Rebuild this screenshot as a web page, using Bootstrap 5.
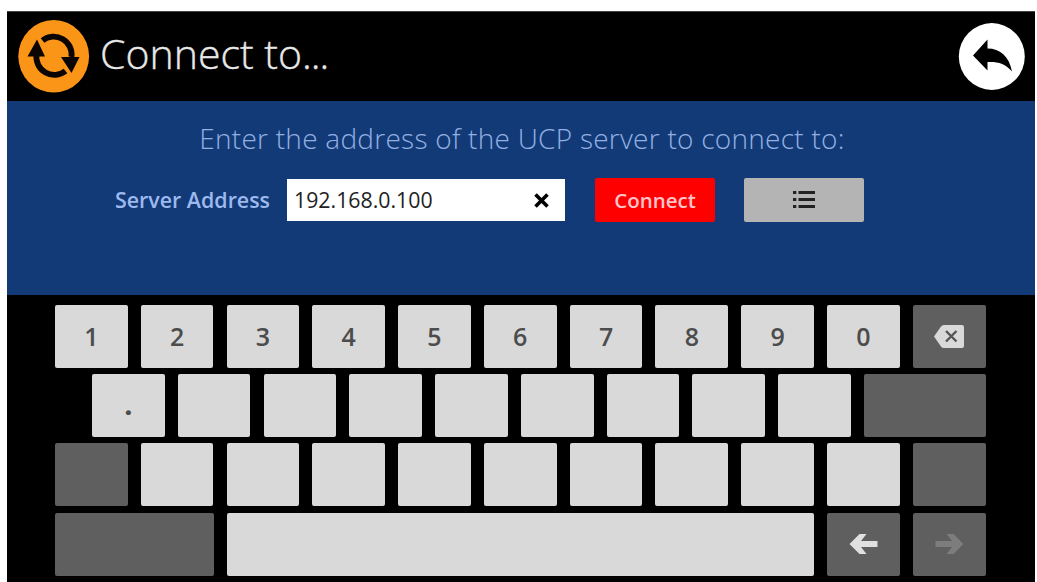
<!DOCTYPE html>
<html lang="en">
<head>
<meta charset="utf-8">
<meta name="viewport" content="width=device-width, initial-scale=1">
<title>Connect to...</title>
<link href="https://cdn.jsdelivr.net/npm/bootstrap@5.3.0/dist/css/bootstrap.min.css" rel="stylesheet">
<style>
body{background:#fff;font-family:"Open Sans","Noto Sans",sans-serif;height:582px;overflow:hidden}
.device{width:1028px;height:571px;margin:11px 0 0 7px;background:#000;border-top:1px solid #444}
.topbar{height:89px;padding:0 10px 0 11px}
.title{font-size:41px;font-weight:300;color:#e8e8e8;line-height:1;margin:0 0 7px 10px;-webkit-text-stroke:.35px #e8e8e8}
.title span{letter-spacing:-1px}
.panel{height:194px;background:#123a77;padding-top:18px}
.prompt{font-size:28px;font-weight:300;letter-spacing:.26px;color:#93b0e3;line-height:38px;margin:0;padding-left:2px}
.addr-row{margin-top:21px;padding-left:108px;height:44px}
.addr-row label{font-size:21.4px;font-weight:600;color:#9db9ee;width:172px;line-height:44px;white-space:nowrap}
.addr-box{width:278px;height:42px;margin-top:1px;background:#fff;padding:0 15px 0 7px}
.addr-box input{font-size:21.3px;color:#222;line-height:30px;outline:0;width:200px}
.action{width:120px;height:44px;border-radius:2px;border:0;padding:0;font-size:20.5px;font-weight:600;line-height:42px}
.go{background:#f00;color:#ffc4cb;margin-left:30px}
.listing{background:#b4b4b4;margin-left:29px}
.keys{padding:10px 49px 0 48px;gap:6.2px}
.key-row{gap:13.1px}
.key{flex:0 0 72.7px;height:63px;border:0;padding:0 0 1px;border-radius:2px;background:#d9d9d9;color:#4c4c4c;font-size:25px;font-weight:600;line-height:62px}
.key.dark{background:#5f5f5f}
.key.dot{font-weight:800}
</style>
</head>
<body>
<main class="device d-flex flex-column">
<header class="topbar d-flex align-items-center">
<svg width="72" height="73" viewBox="0 0 72 73" aria-hidden="true"><ellipse cx="35.700" cy="36.300" rx="35.400" ry="36.200" fill="#fb9517"/><g fill="none" stroke="#0b0603" stroke-width="5.800"><path d="M24.500 20.500A18 18 0 0 1 53.500 37"/><path d="M47.500 51A18 18 0 0 1 18.500 34.500"/></g><path d="M9.500 36.500L19 19.500 27 36.500ZM43 37H61.500L53.500 53Z" fill="#0b0603"/></svg>
<h1 class="title">Connect to<span>...</span></h1>
<button class="btn p-0 border-0 ms-auto d-flex" aria-label="Back"><svg width="67" height="67" viewBox="0 0 67 67"><ellipse cx="33.800" cy="33.500" rx="33" ry="33.400" fill="#fff"/><path d="M15 32.500L29.500 16.500V25.500C42 25.500 51 33 54 48.500 47 40.500 40 38.500 29.500 39V47.500Z" fill="#000"/></svg></button>
</header>
<section class="panel">
<p class="prompt text-center">Enter the address of the UCP server to connect to:</p>
<div class="addr-row d-flex">
<label for="address">Server Address</label>
<div class="addr-box d-flex align-items-center justify-content-between"><input id="address" class="border-0 p-0" value="192.168.0.100"><svg width="17" height="17" viewBox="0 0 17 17" aria-hidden="true"><path d="M2.500 2.500L14.500 14.500M14.500 2.500L2.500 14.500" stroke="#000" stroke-width="3.600"/></svg></div>
<button class="action go">Connect</button>
<button class="action listing d-flex align-items-center justify-content-center" aria-label="Server list"><svg width="22" height="20" viewBox="0 0 22 20"><path d="M0 2.500H3.300M0 9.500H3.300M0 16.500H3.300M5.500 2.500H22M5.500 9.500H22M5.500 16.500H22" stroke="#222" stroke-width="2.800"/></svg></button>
</div>
</section>
<section class="keys d-flex flex-column">
<div class="key-row d-flex"><button class="key">1</button><button class="key">2</button><button class="key">3</button><button class="key">4</button><button class="key">5</button><button class="key">6</button><button class="key">7</button><button class="key">8</button><button class="key">9</button><button class="key">0</button><button class="key dark d-flex align-items-center justify-content-center" aria-label="Delete"><svg width="30" height="23" viewBox="0 0 30 23"><path d="M0 11.500L7 1.500Q8 0 10 0H28Q30 0 30 2V21Q30 23 28 23H10Q8 23 7 21.500Z" fill="#d9d9d9"/><path d="M12 6L22.500 16.500M22.500 6L12 16.500" stroke="#555" stroke-width="2.400"/></svg></button></div>
<div class="key-row d-flex" style="padding-left:37px"><button class="key dot">.</button><button class="key"></button><button class="key"></button><button class="key"></button><button class="key"></button><button class="key"></button><button class="key"></button><button class="key"></button><button class="key"></button><button class="key dark flex-fill"></button></div>
<div class="key-row d-flex"><button class="key dark"></button><button class="key"></button><button class="key"></button><button class="key"></button><button class="key"></button><button class="key"></button><button class="key"></button><button class="key"></button><button class="key"></button><button class="key"></button><button class="key dark"></button></div>
<div class="key-row d-flex"><button class="key dark" style="flex-basis:158.500px"></button><button class="key" style="flex-basis:587.500px" aria-label="Space"></button><button class="key dark d-flex align-items-center justify-content-center" aria-label="Left"><svg width="29" height="22" viewBox="0 0 29 22"><path d="M28.500 8V14H12L17.500 21H10.500L.5 11 10.500 1H17.500L12 8Z" fill="#e0e0e0"/></svg></button><button class="key dark d-flex align-items-center justify-content-center" aria-label="Right"><svg width="29" height="22" viewBox="0 0 29 22"><path d="M.5 8V14H17L11.500 21H18.500L28.500 11 18.500 1H11.500L17 8Z" fill="#7d7d7d"/></svg></button></div>
</section>
</main>
<script src="https://cdn.jsdelivr.net/npm/bootstrap@5.3.0/dist/js/bootstrap.bundle.min.js"></script>
</body>
</html>
